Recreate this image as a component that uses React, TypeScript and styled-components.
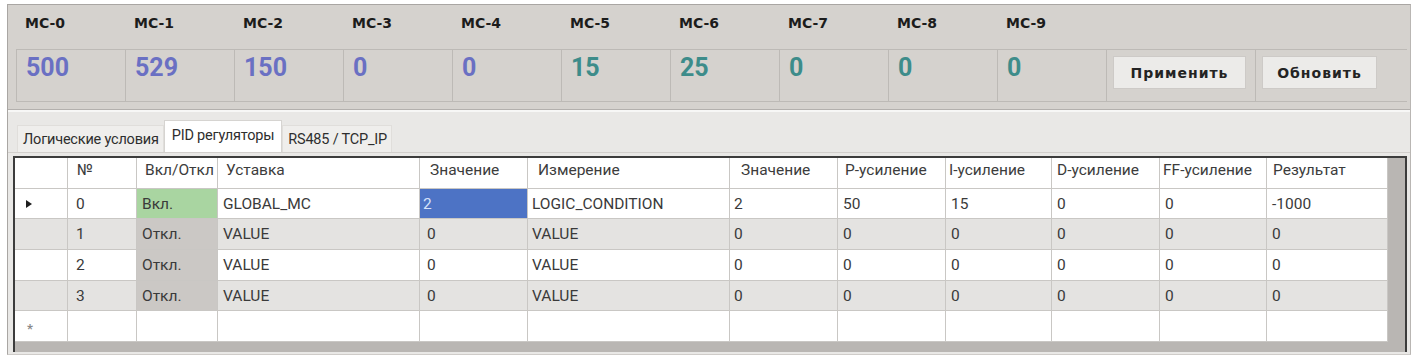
import React from "react";
import styled, { createGlobalStyle } from "styled-components";

const Global = createGlobalStyle`
  html, body { margin: 0; padding: 0; background: #ffffff; }
  body { font-family: "Roboto", "Liberation Sans", sans-serif; }
`;

const Frame = styled.div`
  box-sizing: border-box;
  margin: 4px 0 0 7px;
  width: 1404px;
  height: 351px;
  border-top: 1px solid #a9a6a3;
  border-left: 1px solid #a9a6a3;
  border-right: 1px solid #b9b6b3;
  border-bottom: 1px solid #cfccc9;
  background: #e9e8e6;
  display: flex;
  flex-direction: column;
`;

const TopPanel = styled.div`
  box-sizing: border-box;
  height: 105px;
  background: #d5d2ce;
  border-bottom: 1px solid #b3b0ad;
  padding: 0 0 0 8px;
  display: flex;
  flex-direction: column;
`;

const COLS = "repeat(10, 109px) 149px 152px";

const LabelRow = styled.div`
  display: grid;
  grid-template-columns: ${COLS};
  height: 44px;
  align-items: center;
`;

const Label = styled.div`
  padding-left: 9px;
  font-family: "DejaVu Sans", sans-serif;
  font-weight: bold;
  font-size: 14px;
  color: #1c1c1c;
  margin-top: -8px;
`;

const ValueRow = styled.div`
  display: grid;
  grid-template-columns: ${COLS};
  height: 53px;
  box-sizing: border-box;
  border: 1px solid #bdbab6;
  border-right: none;
  width: 1391px;
`;

const ValueCell = styled.div<{ $last?: boolean }>`
  box-sizing: border-box;
  border-right: ${(p) => (p.$last ? "none" : "1px solid #bdbab6")};
  padding: 5px 0 0 9px;
  display: flex;
  align-items: flex-start;
`;

const Value = styled.span<{ $color: string }>`
  font-family: "Roboto", sans-serif;
  font-weight: bold;
  font-size: 25px;
  line-height: 1;
  color: ${(p) => p.$color};
`;

const ButtonCell = styled(ValueCell)`
  padding: 6px 0 0 6px;
`;

const Button = styled.button<{ $w: number }>`
  box-sizing: border-box;
  width: ${(p) => p.$w}px;
  height: 33px;
  background: #ecebe9;
  border: 1px solid #cdcac7;
  border-radius: 0;
  font-family: "DejaVu Sans", sans-serif;
  font-weight: bold;
  font-size: 14px;
  letter-spacing: 1px;
  color: #232323;
  padding: 0;
  margin: 0;
`;

const TabArea = styled.div`
  flex: 1;
  display: flex;
  flex-direction: column;
  border-top: 2px solid #f7f7f6;
`;

const TabStrip = styled.div`
  height: 40px;
  box-sizing: border-box;
  display: flex;
  align-items: flex-end;
  padding-left: 9px;
`;

const Tab = styled.div<{ $active?: boolean }>`
  box-sizing: border-box;
  height: ${(p) => (p.$active ? 32 : 27)}px;
  padding: ${(p) => (p.$active ? "0 7px 3px 7px" : "0 4px 0 5px")};
  background: ${(p) => (p.$active ? "#ffffff" : "#efeeec")};
  border: 1px solid ${(p) => (p.$active ? "#d6d4d1" : "#e0dedb")};
  border-bottom: none;
  display: flex;
  align-items: center;
  font-size: 14.5px;
  letter-spacing: -0.2px;
  color: #2e2e2e;
  white-space: nowrap;
`;

const TabPage = styled.div`
  flex: 1;
  box-sizing: border-box;
  border-top: 1px solid #d2cfcc;
  padding: 3px 0 0 5px;
  display: flex;
`;

const Grid = styled.div`
  box-sizing: border-box;
  width: 1394px;
  height: 196px;
  border-top: 2px solid #3c3c3c;
  border-left: 2px solid #3c3c3c;
  border-right: 2px solid #3c3c3c;
  background: #b9b6b3;
  display: flex;
  flex-direction: column;
`;

const COL_W = [53, 69, 81, 202, 108, 202, 108, 108, 106, 108, 107, 121];
const GRID_COLS = COL_W.map((w) => `${w}px`).join(" ");

const Row = styled.div<{ $h: number; $bg: string }>`
  display: grid;
  grid-template-columns: ${GRID_COLS};
  height: ${(p) => p.$h}px;
  width: 1373px;
  box-sizing: border-box;
  background: ${(p) => p.$bg};
  border-bottom: 1px solid #c9c7c4;
`;

const Cell = styled.div<{ $bg?: string; $pad?: number; $color?: string; $head?: boolean }>`
  box-sizing: border-box;
  border-right: 1px solid #c9c7c4;
  background: ${(p) => p.$bg || "transparent"};
  padding-left: ${(p) => (p.$pad ?? 5)}px;
  padding-bottom: ${(p) => (p.$head ? 7 : 0)}px;
  display: flex;
  align-items: center;
  font-size: 15.5px;
  color: ${(p) => p.$color || "#3a3a3a"};
  white-space: nowrap;
  overflow: hidden;
`;

const Marker = styled.span`
  display: inline-block;
  width: 0;
  height: 0;
  border-left: 6px solid #1e1e1e;
  border-top: 4px solid transparent;
  border-bottom: 4px solid transparent;
`;

const NewMark = styled.span`
  font-size: 13px;
  font-weight: bold;
  color: #8a8a8a;
  margin-top: 4px;
`;

const BLUE = "#6a70c3";
const TEAL = "#3d8c8a";

const mcValues: { v: string; c: string }[] = [
  { v: "500", c: BLUE },
  { v: "529", c: BLUE },
  { v: "150", c: BLUE },
  { v: "0", c: BLUE },
  { v: "0", c: BLUE },
  { v: "15", c: TEAL },
  { v: "25", c: TEAL },
  { v: "0", c: TEAL },
  { v: "0", c: TEAL },
  { v: "0", c: TEAL },
];

const headers: { t: string; p: number }[] = [
  { t: "", p: 0 },
  { t: "№", p: 9 },
  { t: "Вкл/Откл", p: 8 },
  { t: "Уставка", p: 8 },
  { t: "Значение", p: 10 },
  { t: "Измерение", p: 10 },
  { t: "Значение", p: 11 },
  { t: "P-усиление", p: 7 },
  { t: "I-усиление", p: 3 },
  { t: "D-усиление", p: 5 },
  { t: "FF-усиление", p: 3 },
  { t: "Результат", p: 6 },
];

type DataRow = { id: string; on: boolean; set: string; val: string; meas: string; rest: string[] };

const rows: DataRow[] = [
  { id: "0", on: true, set: "GLOBAL_MC", val: "2", meas: "LOGIC_CONDITION", rest: ["2", "50", "15", "0", "0", "-1000"] },
  { id: "1", on: false, set: "VALUE", val: "0", meas: "VALUE", rest: ["0", "0", "0", "0", "0", "0"] },
  { id: "2", on: false, set: "VALUE", val: "0", meas: "VALUE", rest: ["0", "0", "0", "0", "0", "0"] },
  { id: "3", on: false, set: "VALUE", val: "0", meas: "VALUE", rest: ["0", "0", "0", "0", "0", "0"] },
];

const rowHeights = [30, 31, 31, 30];

export default function App() {
  return (
    <>
      <Global />
      <Frame>
        <TopPanel>
          <LabelRow>
            {mcValues.map((_, i) => (
              <Label key={i}>MC-{i}</Label>
            ))}
          </LabelRow>
          <ValueRow>
            {mcValues.map((m, i) => (
              <ValueCell key={i}>
                <Value $color={m.c}>{m.v}</Value>
              </ValueCell>
            ))}
            <ButtonCell>
              <Button $w={133}>Применить</Button>
            </ButtonCell>
            <ButtonCell $last>
              <Button $w={115}>Обновить</Button>
            </ButtonCell>
          </ValueRow>
        </TopPanel>
        <TabArea>
          <TabStrip>
            <Tab>Логические условия</Tab>
            <Tab $active>PID регуляторы</Tab>
            <Tab>RS485 / TCP_IP</Tab>
          </TabStrip>
          <TabPage>
            <Grid>
              <Row $h={31} $bg="#ffffff">
                {headers.map((h, i) => (
                  <Cell key={i} $pad={h.p} $head $color="#3c3c3c">
                    {h.t}
                  </Cell>
                ))}
              </Row>
              {rows.map((r, i) => {
                const bg = i % 2 === 1 ? "#e4e3e1" : "#ffffff";
                return (
                  <Row key={r.id} $h={rowHeights[i]} $bg={bg}>
                    <Cell $pad={11}>{i === 0 ? <Marker /> : null}</Cell>
                    <Cell $pad={8}>{r.id}</Cell>
                    <Cell $bg={r.on ? "#a9d5a1" : "#cbc8c5"} $pad={5}>
                      {r.on ? "Вкл." : "Откл."}
                    </Cell>
                    <Cell $pad={5}>{r.set}</Cell>
                    <Cell $bg={i === 0 ? "#4d73c5" : undefined} $color={i === 0 ? "#d6e2fa" : undefined} $pad={i === 0 ? 3 : 7}>
                      {r.val}
                    </Cell>
                    <Cell $pad={4}>{r.meas}</Cell>
                    {r.rest.map((v, j) => (
                      <Cell key={j} $pad={j === 0 ? 4 : 5}>
                        {v}
                      </Cell>
                    ))}
                  </Row>
                );
              })}
              <Row $h={31} $bg="#ffffff">
                <Cell $pad={12}>
                  <NewMark>*</NewMark>
                </Cell>
                {COL_W.slice(1).map((_, j) => (
                  <Cell key={j} />
                ))}
              </Row>
            </Grid>
          </TabPage>
        </TabArea>
      </Frame>
    </>
  );
}
